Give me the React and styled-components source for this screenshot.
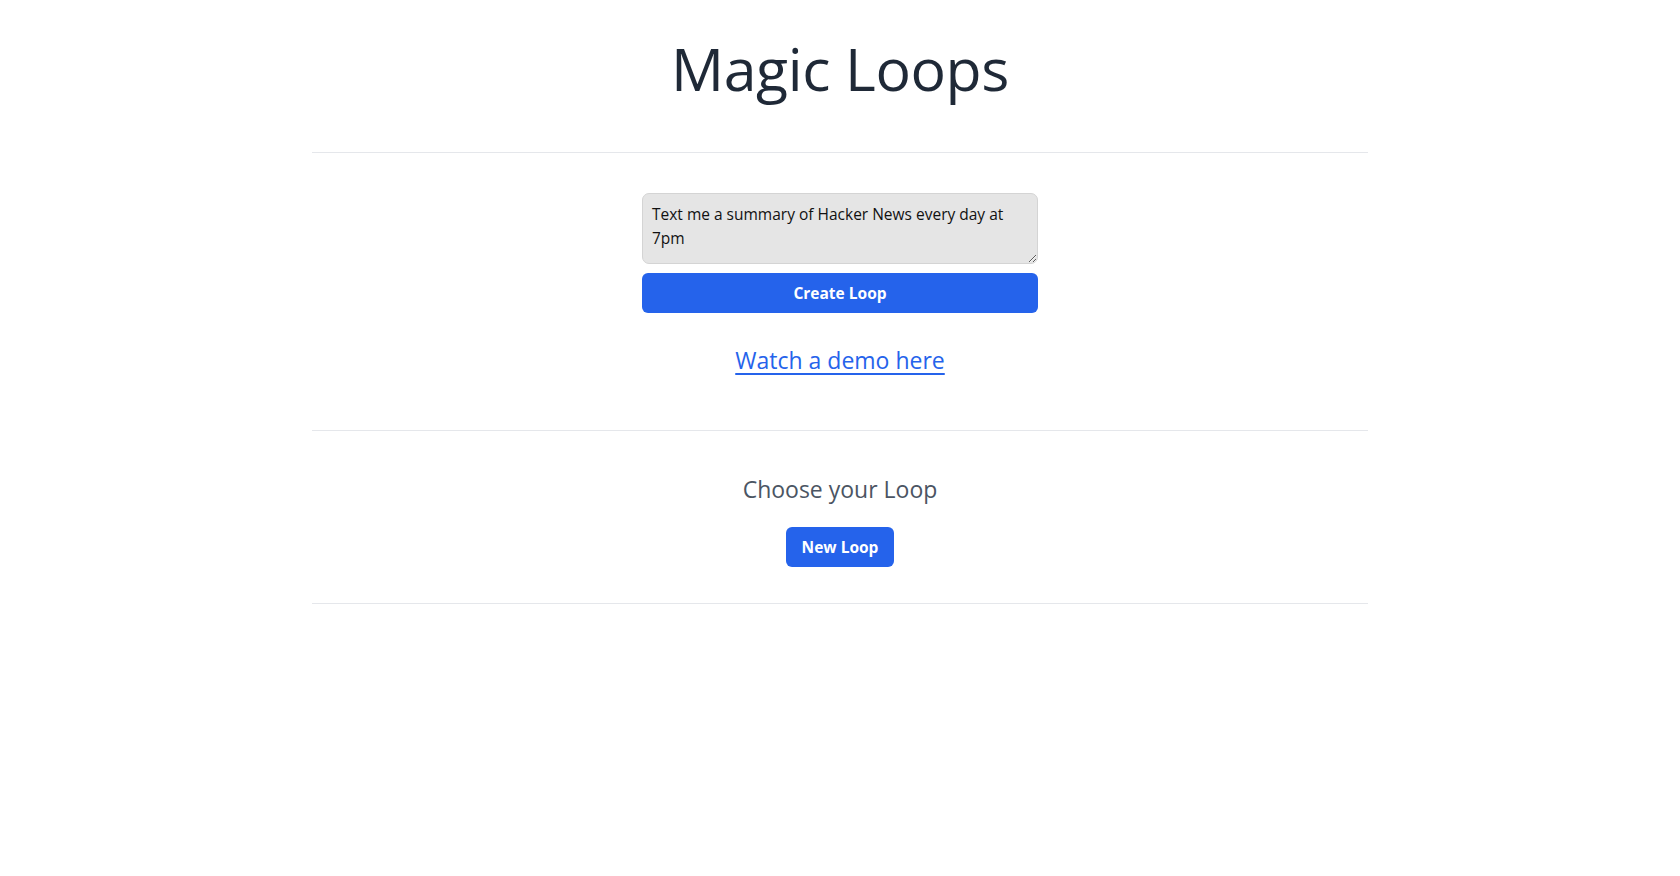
import React from "react";
import styled, { createGlobalStyle } from "styled-components";

const Global = createGlobalStyle`
  html, body { margin: 0; padding: 0; background: #ffffff; }
  body { font-family: "Open Sans", "Noto Sans", sans-serif; }
  * { box-sizing: border-box; }
`;

const Page = styled.main`
  width: 1056px;
  margin: 0 auto;
  display: flex;
  flex-direction: column;
`;

const Section = styled.section`
  display: flex;
  flex-direction: column;
  align-items: center;
  padding: ${(p) => p.$pad};
  border-bottom: 1px solid #e5e7eb;
`;

const Title = styled.h1`
  margin: 0;
  font-family: "Open Sans", sans-serif;
  font-weight: 400;
  font-size: 59px;
  line-height: 60px;
  color: #1f2937;
  letter-spacing: -0.4px;
`;

const Form = styled.form`
  width: 396px;
  display: flex;
  flex-direction: column;
  gap: 9px;
`;

const Prompt = styled.textarea`
  width: 100%;
  height: 71px;
  padding: 8px 9px;
  border: 1px solid #d4d4d4;
  border-radius: 7px;
  background: #e5e5e5;
  color: #111111;
  font-family: "Open Sans", sans-serif;
  font-size: 15.5px;
  line-height: 24px;
  resize: vertical;
  outline: none;
`;

const Button = styled.button`
  height: 40px;
  width: ${(p) => p.$width || "auto"};
  padding: 0 16px;
  border: none;
  border-radius: 6px;
  background: #2563eb;
  color: #ffffff;
  font-family: "Open Sans", sans-serif;
  font-weight: 700;
  font-size: 15.5px;
  cursor: pointer;
`;

const DemoLink = styled.a`
  margin-top: 31px;
  font-family: "Open Sans", sans-serif;
  font-size: 23px;
  line-height: 32px;
  color: #2563eb;
  text-decoration: underline;
  text-underline-offset: 4px;
`;

const Subtitle = styled.h2`
  margin: 0;
  font-family: "Open Sans", sans-serif;
  font-weight: 400;
  font-size: 23px;
  line-height: 32px;
  color: #4b5563;
`;

const Spacer = styled.div`
  height: ${(p) => p.$h}px;
`;

export default function App() {
  return (
    <>
      <Global />
      <Page>
        <Section $pad="38px 0 54px">
          <Title>Magic Loops</Title>
        </Section>
        <Section $pad="40px 0 54px">
          <Form onSubmit={(e) => e.preventDefault()}>
            <Prompt defaultValue="Text me a summary of Hacker News every day at 7pm" />
            <Button type="submit" $width="100%">Create Loop</Button>
          </Form>
          <DemoLink href="#">Watch a demo here</DemoLink>
        </Section>
        <Section $pad="42px 0 36px">
          <Subtitle>Choose your Loop</Subtitle>
          <Spacer $h={22} />
          <Button type="button">New Loop</Button>
        </Section>
      </Page>
    </>
  );
}
